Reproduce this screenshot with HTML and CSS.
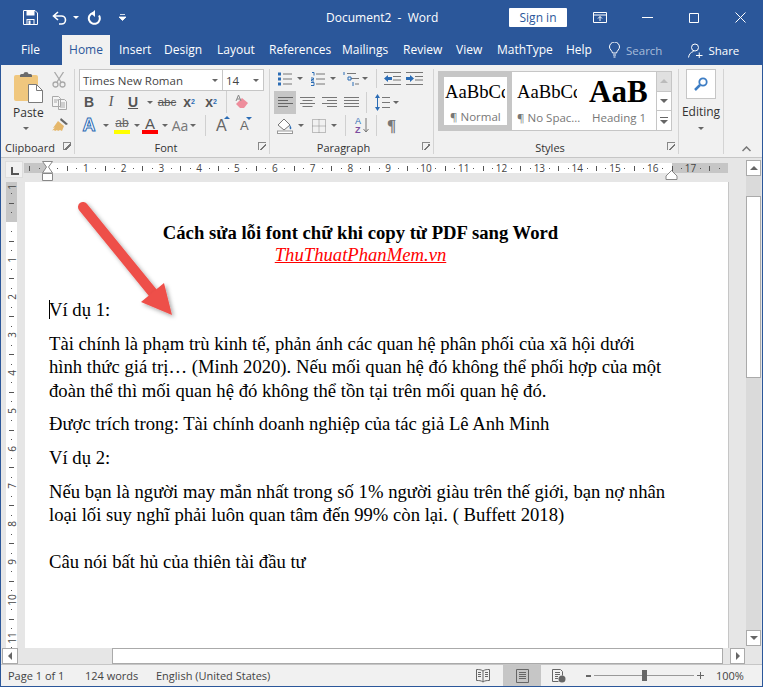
FILE: index.html
```html
<!DOCTYPE html>
<html lang="vi">
<head>
<meta charset="utf-8">
<title>Document2 - Word</title>
<link rel="stylesheet" href="styles.css">
</head>
<body>
<div class="app">
  <header class="titlebar">
    <div class="qat">
      <svg class="i-save" width="15" height="15" viewBox="0 0 15 15"><path d="M.5.500h11.500l2.500 2.500v11.500H.5z" fill="none" stroke="#fff"/><path d="M3.500 1h8v4.500h-8zM3.500 9h8v5.500h-1V10H4.500v4.500h-1zM5.500 10.500h2v3.500h-2z" fill="#fff"/></svg>
      <svg class="i-undo" width="15" height="14" viewBox="0 0 15 14"><path d="M6 1 1.500 5 6 9M2 5h7.500a4 4 0 0 1 0 8H7" fill="none" stroke="#fff" stroke-width="1.600"/></svg>
      <span class="caret caret-w qat-caret"></span>
      <svg class="i-redo" width="14" height="15" viewBox="0 0 14 15"><path d="M6 3a5.500 5.500 0 1 0 6 2.500" fill="none" stroke="#fff" stroke-width="2"/><path d="M8 0v7l-4-3.500z" fill="#fff"/></svg>
      <svg class="i-cust" width="7" height="7" viewBox="0 0 7 7"><path d="M1 .5h5M0 3h7l-3.500 3.500z" stroke="#fff" fill="#fff" stroke-width=".8"/></svg>
    </div>
    <div class="doc-title">Document2&nbsp; -&nbsp; Word</div>
    <div class="win">
      <button class="signin">Sign in</button>
      <svg class="i-rd" width="14" height="11" viewBox="0 0 14 11"><path d="M.5.500h13v10H.5zM.5 3h13M7 9V4.500M5 6.500l2-2 2 2" fill="none" stroke="#fff"/></svg>
      <svg class="i-min" width="11" height="1" viewBox="0 0 11 1"><path d="M0 .5h11" stroke="#fff"/></svg>
      <svg class="i-max" width="10" height="10" viewBox="0 0 10 10"><path d="M.5.500h9v9h-9z" fill="none" stroke="#fff"/></svg>
      <svg class="i-x" width="11" height="11" viewBox="0 0 11 11"><path d="M.5.500l10 10M10.500.500l-10 10" stroke="#fff"/></svg>
    </div>
  </header>

  <nav class="tabs">
    <span class="tab tab-file">File</span>
    <span class="tab tab-home">Home</span>
    <span class="tab t-insert">Insert</span>
    <span class="tab t-design">Design</span>
    <span class="tab t-layout">Layout</span>
    <span class="tab t-refs">References</span>
    <span class="tab t-mail">Mailings</span>
    <span class="tab t-review">Review</span>
    <span class="tab t-view">View</span>
    <span class="tab t-math">MathType</span>
    <span class="tab t-help">Help</span>
    <span class="tell">
      <svg width="11" height="16" viewBox="0 0 11 16"><path d="M3.500 11C3 8.500.5 7.500.5 5a5 5 0 0 1 10 0c0 2.500-2.500 3.500-3 6zM4 13h3M4.500 15h2" fill="none" stroke="#fff"/></svg>
      <span class="search">Search</span>
    </span>
    <span class="share">
      <svg width="15" height="15" viewBox="0 0 15 15"><circle cx="7" cy="4.500" r="3.500" fill="none" stroke="#fff"/><path d="M.5 14.500c.5-3.500 2.500-5.500 5-6M8 12.500h6.500M11.250 9.500v6" fill="none" stroke="#fff"/></svg>
      Share
    </span>
  </nav>

  <section class="ribbon">
    <div class="group g-clip">
      <div class="g-body clip-body">
        <div class="paste">
          <svg width="29" height="31" viewBox="0 0 29 31"><rect x="0" y="3" width="24" height="26" rx="2" fill="#f0c77e"/><path d="M6 3a2 2 0 0 1 2-1h1.500a2.500 2 0 0 1 5 0H16a2 2 0 0 1 2 1v2H6z" fill="#6b6b6b"/><path d="M14.500 12.500h8l6 6v12h-14z" fill="#fff" stroke="#7a7a7a"/><path d="M22.500 12.500v6h6" fill="none" stroke="#7a7a7a"/></svg>
          <span class="paste-label">Paste</span>
          <span class="caret"></span>
        </div>
        <div class="clip-tools">
          <svg width="14" height="16" viewBox="0 0 14 16"><path d="M2.500 0 9 10M11.500 0 5 10" stroke="#a9a9a9" stroke-width="1.300" fill="none"/><circle cx="3.500" cy="12.500" r="2.500" fill="none" stroke="#a9a9a9" stroke-width="1.300"/><circle cx="10.500" cy="12.500" r="2.500" fill="none" stroke="#a9a9a9" stroke-width="1.300"/></svg>
          <svg width="15" height="14" viewBox="0 0 15 14"><path d="M.5.500h6l2 2v8h-8zM6.500 3.500h6l2 2v8h-8zM2 4h4M2 6h3M8 7h5M8 9h5M8 11h5" fill="#f5f5f5" stroke="#a9a9a9"/></svg>
          <svg width="16" height="14" viewBox="0 0 16 14"><path d="M9 0l7 6-2 1-6-5z" fill="#666"/><path d="M6 3l6 5-2 5-2-1-2 1-1-1-2 1-1-1-2 .5 3-3-2 .5z" fill="#e5b76b"/></svg>
        </div>
      </div>
      <div class="g-label">Clipboard<span class="launch"></span></div>
    </div>

    <div class="group g-font">
      <div class="g-body font-body">
        <div class="selects">
          <div class="sel sel-font"><span>Times New Roman</span><i class="caret"></i></div>
          <div class="sel sel-size"><span>14</span><i class="caret"></i></div>
        </div>
        <div class="row row-font2">
          <span class="tool w22 tb">B</span>
          <span class="tool w22 ti">I</span>
          <span class="tool w22 tu">U</span><span class="caret c13"></span>
          <span class="tool w22 ts">abc</span>
          <span class="tool w22 tx">x<sub>2</sub></span>
          <span class="tool w22 tx">x<sup>2</sup></span>
          <span class="vsep sep-a"></span>
          <svg class="erase" width="16" height="16" viewBox="0 0 16 16"><path d="M5 14l-4-4 6-6 6 5-4 5z" fill="#ee8d9c"/><path d="M1 7l2.500-6L6 7M2 5h3" fill="none" stroke="#888"/></svg>
        </div>
        <div class="row row-font3">
          <span class="tool w22 te">A</span><span class="caret c13 c-te"></span>
          <span class="hl"><span class="hl-t">ab</span><span class="hl-b"></span></span><span class="caret c13 c-hl"></span>
          <span class="fc"><span class="fc-t">A</span><span class="fc-b"></span></span><span class="caret c13 c-fc"></span>
          <span class="tool aa">Aa</span><span class="caret c13 c-aa"></span>
          <span class="vsep sep-b"></span>
          <span class="grow">A<i class="tri-up"></i></span>
          <span class="shrink">A<i class="tri-dn"></i></span>
        </div>
      </div>
      <div class="g-label">Font<span class="launch"></span></div>
    </div>

    <div class="group g-para">
      <div class="g-body para-body">
        <div class="row row-p1">
          <svg width="14" height="14" viewBox="0 0 14 14"><path d="M5 2h9M5 7h9M5 12h9" stroke="#777"/><path d="M0 .500h3v3H0zM0 5.500h3v3H0zM0 10.500h3v3H0z" fill="#2b6cb5"/></svg><span class="caret c-a"></span>
          <svg class="ic-num" width="14" height="14" viewBox="0 0 14 14"><path d="M5 2h9M5 7h9M5 12h9" stroke="#777"/><path d="M1 .500h2v3M0 6h2.500v1.500H.500V9h2.500M0 10.500h3v3H0" fill="none" stroke="#2b6cb5"/></svg><span class="caret c-a"></span>
          <svg class="ic-ml" width="17" height="14" viewBox="0 0 17 14"><path d="M4 1.500h9M8 6.500h8M12 12h4" stroke="#777"/><path d="M1 0v3M5 5h3v3H5zM10 10v4" stroke="#2b6cb5" fill="none"/></svg><span class="caret c-b"></span>
          <span class="vsep sep-c"></span>
          <svg class="ic-out" width="17" height="13" viewBox="0 0 17 13"><path d="M0 .5h17M9 4.500h8M9 8h8M0 12.500h17" stroke="#777"/><path d="M0 6.500 4 3v2h4v3H4v2z" fill="#2b6cb5"/></svg>
          <svg class="ic-in" width="17" height="13" viewBox="0 0 17 13"><path d="M0 .5h17M9 4.500h8M9 8h8M0 12.500h17" stroke="#777"/><path d="M8 6.500 4 3v2H0v3h4v2z" fill="#2b6cb5"/></svg>
        </div>
        <div class="row row-p2">
          <span class="al al-on"><svg width="15" height="11" viewBox="0 0 15 11"><path d="M0 .5h15M0 3.500h10M0 6.500h15M0 9.500h10" stroke="#666"/></svg></span>
          <span class="al"><svg width="15" height="11" viewBox="0 0 15 11"><path d="M0 .5h15M2.500 3.500h10M0 6.500h15M2.500 9.500h10" stroke="#777"/></svg></span>
          <span class="al"><svg width="15" height="11" viewBox="0 0 15 11"><path d="M0 .5h15M5 3.500h10M0 6.500h15M5 9.500h10" stroke="#777"/></svg></span>
          <span class="al"><svg width="15" height="11" viewBox="0 0 15 11"><path d="M0 .5h15M0 3.500h15M0 6.500h15M0 9.500h15" stroke="#777"/></svg></span>
          <span class="vsep sep-d"></span>
          <svg class="ic-ls" width="15" height="17" viewBox="0 0 15 17"><path d="M7 3.500h8M7 8.500h8M7 13.500h8" stroke="#777"/><path d="M2.500 3v11" stroke="#2b6cb5"/><path d="M2.500 0 5 4H0zM2.500 17 5 13H0z" fill="#2b6cb5"/></svg><span class="caret c-c"></span>
        </div>
        <div class="row row-p3">
          <svg class="ic-shade" width="16" height="16" viewBox="0 0 16 16"><path d="M1 7l6-6 6 6-6 5z" fill="#fff" stroke="#777"/><path d="M13 7c1 2 2 3 1 4s-2-1-1-4" fill="#2b6cb5"/><rect x=".5" y="13" width="15" height="2.500" fill="#fff" stroke="#999"/></svg><span class="caret c-d"></span>
          <svg class="ic-bord" width="14" height="14" viewBox="0 0 14 14"><path d="M.5.500h13v13H.5zM7 .5v13M.5 7h13" fill="none" stroke="#888" stroke-dasharray="1 1"/></svg><span class="caret c-e"></span>
          <span class="vsep sep-e"></span>
          <span class="sort"><span class="az"><b class="sa">A</b><b class="sz">Z</b></span><svg width="6" height="15" viewBox="0 0 6 15"><path d="M3 0v14M.5 11 3 14l2.500-3" fill="none" stroke="#777"/></svg></span>
          <span class="vsep sep-f"></span>
          <span class="pil">¶</span>
        </div>
      </div>
      <div class="g-label">Paragraph<span class="launch"></span></div>
    </div>

    <div class="group g-styles">
      <div class="g-body styles-body">
        <div class="gallery">
          <div class="st st-normal"><span class="st-prev">AaBbCc</span><span class="st-name">¶ Normal</span></div>
          <div class="st st-nospace"><span class="st-prev">AaBbCc</span><span class="st-name">¶ No Spac...</span></div>
          <div class="st st-head"><span class="st-big">AaB</span><span class="st-name">Heading 1</span></div>
          <div class="st-scroll">
            <span class="sb sb-up"><i class="tri-s up"></i></span>
            <span class="sb"><i class="tri-s"></i></span>
            <span class="sb sb-more"><i class="bar"></i><i class="tri-s"></i></span>
          </div>
        </div>
      </div>
      <div class="g-label">Styles<span class="launch"></span></div>
    </div>

    <div class="group g-edit">
      <div class="edit-btn"><svg width="14" height="14" viewBox="0 0 14 14"><circle cx="9" cy="5" r="3.700" fill="none" stroke="#3d7dc4" stroke-width="1.800"/><path d="M6 8l-5 5" stroke="#3d7dc4" stroke-width="2.500"/></svg></div>
      <span class="edit-label">Editing</span>
      <span class="caret"></span>
    </div>
    <div class="collapse"><svg width="9" height="6" viewBox="0 0 9 6"><path d="M.5 5 4.500 1l4 4" fill="none" stroke="#777" stroke-width="1.500"/></svg></div>
  </section>

  <main class="work">
    <div class="corner"><span class="l-mark"></span></div>
    <div class="hruler">
      <div class="hr-in">
        <span class="cm">&nbsp;</span><span class="cm">1</span><span class="cm">2</span><span class="cm">3</span><span class="cm">4</span><span class="cm">5</span><span class="cm">6</span><span class="cm">7</span><span class="cm">8</span><span class="cm">9</span><span class="cm">10</span><span class="cm">11</span><span class="cm">12</span><span class="cm">13</span><span class="cm">14</span><span class="cm">15</span><span class="cm">16</span><span class="cm">17</span><span class="cm cm-end"></span>
      </div>
      <svg class="mark-l" width="13" height="21" viewBox="0 0 13 21"><path d="M1.500.5h10L7.500 6l4 6h-10l4-6z" fill="#fff" stroke="#888"/><path d="M1.500 12.500h10v7h-10z" fill="#fff" stroke="#888"/></svg>
      <svg class="mark-r" width="13" height="10" viewBox="0 0 13 10"><path d="M6.500.5 12 6v3.500H1V6z" fill="#fff" stroke="#888"/></svg>
    </div>
    <div class="vscroll">
      <span class="vb"><i class="tri-s up"></i></span>
      <span class="vtrack"><span class="vthumb"></span></span>
      <span class="vb"><i class="tri-s"></i></span>
    </div>
    <div class="vruler">
      <span class="vcm vcm-top"><b>1</b></span><span class="vcm"><b>&nbsp;</b></span><span class="vcm"><b>1</b></span><span class="vcm"><b>2</b></span><span class="vcm"><b>3</b></span><span class="vcm"><b>4</b></span><span class="vcm"><b>5</b></span><span class="vcm"><b>6</b></span><span class="vcm"><b>7</b></span><span class="vcm"><b>8</b></span><span class="vcm"><b>9</b></span><span class="vcm"><b>10</b></span><span class="vcm vcm-end"><b>11</b></span>
    </div>
    <article class="page">
      <h1 class="doc-h">Cách sửa lỗi font chữ khi copy từ PDF sang Word</h1>
      <p class="doc-link">ThuThuatPhanMem.vn</p>
      <p class="ex1"><span class="cursor"></span>Ví dụ 1:</p>
      <p class="body-p">Tài chính là phạm trù kinh tế, phản ánh các quan hệ phân phối của xã hội dưới<br>hình thức giá trị… (Minh 2020). Nếu mối quan hệ đó không thể phối hợp của một<br>đoàn thể thì mối quan hệ đó không thể tồn tại trên mối quan hệ đó.</p>
      <p class="body-p">Được trích trong: Tài chính doanh nghiệp của tác giả Lê Anh Minh</p>
      <p class="body-p">Ví dụ 2:</p>
      <p class="body-p">Nếu bạn là người may mắn nhất trong số 1% người giàu trên thế giới, bạn nợ nhân<br>loại lối suy nghĩ phải luôn quan tâm đến 99% còn lại. ( Buffett 2018)</p>
      <p class="body-p last">Câu nói bất hủ của thiên tài đầu tư</p>
      <svg class="arrow" width="110" height="130" viewBox="0 0 110 130">
        <defs><filter id="sh" x="-20%" y="-20%" width="150%" height="150%"><feDropShadow dx="2" dy="2" stdDeviation="2" flood-color="#000" flood-opacity=".35"/></filter></defs>
        <path d="M8 8 78 94" stroke="#ee4f4a" stroke-width="10" stroke-linecap="round" fill="none" filter="url(#sh)"/>
        <path d="M97 116 66 103 89 84z" fill="#ee4f4a" filter="url(#sh)"/>
      </svg>
    </article>
  </main>

  <div class="hscroll">
    <span class="hb"><i class="tri-h left"></i></span>
    <span class="hthumb"></span>
    <span class="hb hb-r"><i class="tri-h right"></i></span>
  </div>

  <footer class="status">
    <span class="s-page">Page 1 of 1</span>
    <span class="s-words">124 words</span>
    <span class="s-lang">English (United States)</span>
    <svg class="s-read" width="14" height="14" viewBox="0 0 14 14"><path d="M7 2C5 .5 3 .5.500.5v11C3 11.500 5 11.500 7 13c2-1.500 4-1.500 6.500-1.500V.5C11 .5 9 .5 7 2zM7 2v11M2 3.500h3M2 5.500h3M2 7.500h3M9 3.500h3M9 5.500h3M9 7.500h3" fill="none" stroke="#666"/></svg>
    <span class="s-print"><svg width="13" height="14" viewBox="0 0 13 14"><path d="M.5.500h12v13H.5zM3 3.500h7M3 5.500h7M3 7.500h7M3 9.500h7" fill="none" stroke="#666"/></svg></span>
    <svg class="s-web" width="14" height="14" viewBox="0 0 14 14"><path d="M.5.500h8l2 2v4M.5.500v12h6M3 3.500h5M3 5.500h5M3 7.500h3M3 9.500h3" fill="none" stroke="#666"/><circle cx="10" cy="10" r="3.500" fill="#666"/></svg>
    <span class="z-minus"></span>
    <span class="slider"><span class="knob"></span></span>
    <span class="z-plus"></span>
    <span class="s-zoom">100%</span>
  </footer>
</div>
</body>
</html>
```
FILE: styles.css
```css
* { box-sizing: border-box; }
html, body { margin: 0; padding: 0; }
body { width: 763px; height: 687px; overflow: hidden; font-family: "Open Sans", "Noto Sans", sans-serif; font-size: 11.5px; color: #444; }
svg { display: block; flex: none; }
i { font-style: normal; }
.app { width: 763px; height: 687px; display: flex; flex-direction: column; background: #e6e6e6; border: 1px solid #2b579a; border-top: 0; }

.caret { display: inline-block; width: 0; height: 0; border: 3.5px solid transparent; border-top: 3.5px solid #666; border-bottom: 0; flex: none; }
.caret-w { border-top-color: #fff; }

.titlebar { height: 35px; background: #2b579a; display: flex; align-items: center; color: #fff; position: relative; }
.qat { display: flex; align-items: center; padding-left: 22px; width: 325px; }
.i-save { margin-right: 14px; }
.qat-caret { margin: 0 0 0 6px; }
.i-redo { margin-left: 8px; }
.i-cust { margin-left: 18px; }
.doc-title { width: 183px; font-size: 12px; color: #fff; white-space: nowrap; }
.win { display: flex; align-items: center; }
.signin { width: 58px; height: 19px; background: #fff; color: #2b579a; border: 0; border-radius: 1px; font: 12px "Open Sans", sans-serif; padding: 0; margin-right: 26px; }
.i-rd { margin-right: 35px; }
.i-min { margin-right: 36px; }
.i-max { margin-right: 36px; }

.tabs { height: 30px; background: #2b579a; display: flex; align-items: flex-start; color: #fff; padding-left: 20px; font-size: 12px; white-space: nowrap; }
.tab { height: 30px; line-height: 30px; display: block; }
.tab-file { width: 41px; }
.tab-home { width: 48px; background: #f1f1f1; color: #2b579a; text-align: center; margin-right: 9px; }
.t-insert { width: 45px; }
.t-design { width: 53px; }
.t-layout { width: 52px; }
.t-refs { width: 73px; }
.t-mail { width: 61px; }
.t-review { width: 53px; }
.t-view { width: 41px; }
.t-math { width: 69px; }
.t-help { width: 42px; }
.tell { display: flex; align-items: center; height: 30px; gap: 6px; margin-left: 1px; }
.search { color: #a9bcd9; font-size: 11.5px; }
.share { display: flex; align-items: center; height: 30px; gap: 5px; margin-left: 26px; font-size: 11.5px; }

.ribbon { height: 93px; background: #f1f1f1; border-bottom: 1px solid #c6c6c6; display: flex; align-items: flex-start; padding-top: 4px; position: relative; }
.group { height: 85px; border-right: 1px solid #d4d4d4; display: flex; flex-direction: column; flex: none; }
.g-body { height: 73px; }
.g-label { height: 13px; line-height: 13px; text-align: center; font-size: 11px; position: relative; color: #333; margin-top: 1px; padding-right: 16px; }
.launch { position: absolute; right: 3px; top: 1px; width: 8px; height: 8px; border-left: 1px solid #888; border-top: 1px solid #888; background: linear-gradient(135deg, transparent 50%, #777 50%, #777 65%, transparent 65%); }
.row { display: flex; align-items: center; height: 23px; }
.tool { display: flex; align-items: center; justify-content: center; flex: none; color: #555; }
.w22 { width: 22px; }
.vsep { width: 1px; background: #d0d0d0; flex: none; height: 22px; }

.g-clip { width: 74px; }
.g-clip .g-label { text-align: left; padding: 0 0 0 4px; }
.clip-body { display: flex; }
.paste { width: 50px; padding: 3px 0 0 13px; display: flex; flex-direction: column; }
.paste-label { font-size: 12px; color: #333; line-height: 20px; width: 30px; margin-left: -1px; }
.paste .caret { margin: 4px 0 0 9px; }
.clip-tools { display: flex; flex-direction: column; gap: 8px; padding-left: 1px; padding-top: 3px; }

.g-font { width: 195px; padding-left: 4px; }
.selects { display: flex; }
.sel { height: 22px; background: #fff; border: 1px solid #c6c6c6; display: flex; align-items: center; justify-content: space-between; padding: 0 4px 0 3px; font-size: 11.5px; color: #444; }
.sel-font { width: 144px; }
.sel-size { width: 41px; margin-left: 0; border-left: 0; }
.row-font2 { height: 22px; margin-left: -1px; }
.row-font2 .caret { margin-right: 3px; }
.row-font3 { margin: 1px 0 0 -1px; }
.tb { font: bold 14px "Liberation Sans", sans-serif; }
.ti { font: italic 14px "Liberation Serif", serif; }
.tu { font: bold 14px "Liberation Sans", sans-serif; text-decoration: underline; }
.ts { font: 11.5px "Liberation Sans", sans-serif; text-decoration: line-through; }
.tx { font: bold 14px "Liberation Sans", sans-serif; }
.tx sub, .tx sup { font-size: 7px; color: #2b6cb5; line-height: 0; }
.c13 { margin-left: 3px; margin-right: 3px; }
.sep-a { margin-left: 4px; margin-right: 8px; }
.row-font3 .tool { height: 20px; }
.te { font: bold 18px "Liberation Sans", sans-serif; color: #fff; -webkit-text-stroke: 1px #2b6cb5; }
.hl { width: 16px; margin-left: 2px; display: flex; flex-direction: column; align-items: center; }
.hl-t { font: 12px/13px "Liberation Sans", sans-serif; text-decoration: line-through; color: #666; }
.hl-b { width: 16px; height: 4px; background: #ffff00; }
.c-hl { margin-left: 4px; margin-right: 1px; }
.fc { width: 16px; margin-left: 1px; display: flex; flex-direction: column; align-items: center; }
.fc-t { font: 15px/13px "Liberation Sans", sans-serif; color: #555; }
.fc-b { width: 16px; height: 4px; background: #f00; }
.c-fc { margin-left: 4px; margin-right: 0; }
.aa { width: 16px; margin-left: 4px; font: 14px "Open Sans", sans-serif; color: #777; }
.c-aa { margin-left: 2px; margin-right: 0; }
.sep-b { margin-left: 9px; margin-right: 10px; height: 21px; }
.grow, .shrink { position: relative; font: 16px "Liberation Sans", sans-serif; color: #666; width: 15px; flex: none; }
.grow { margin-right: 9px; }
.shrink { font-size: 13px; width: 10px; }
.tri-up, .tri-dn { position: absolute; left: 8px; width: 0; height: 0; border: 3px solid transparent; }
.tri-up { top: -1px; border-bottom: 3px solid #2b6cb5; border-top: 0; }
.tri-dn { top: -1px; left: 6px; border-top: 3px solid #2b6cb5; border-bottom: 0; }

.g-para { width: 164px; }
.para-body { padding-left: 4px; }
.row-p1 { padding-left: 4px; height: 19px; margin-bottom: 3px; }
.c-a { margin-left: 5px; }
.ic-num { margin-left: 8px; }
.ic-ml { margin-left: 7px; }
.c-b { margin-left: 2px; }
.sep-c { margin-left: 8px; margin-right: 7px; height: 19px; }
.ic-in { margin-left: 5px; }
.row-p2 { height: 23px; }
.al { width: 22px; height: 23px; display: flex; align-items: center; justify-content: center; }
.al-on { background: #c6c6c6; }
.sep-d { margin: 0 8px 0 4px; height: 21px; }
.c-c { margin-left: 3px; }
.row-p3 { padding-left: 3px; height: 23px; }
.c-d { margin-left: 5px; }
.ic-bord { margin-left: 8px; }
.c-e { margin-left: 5px; }
.sep-e { margin: 0 9px 0 8px; height: 21px; }
.sort { display: flex; align-items: center; gap: 2px; width: 14px; flex: none; }
.az { display: flex; flex-direction: column; font: bold 9px/9px "Liberation Sans", sans-serif; }
.sa { color: #2b6cb5; font-weight: 400; }
.sz { color: #7d4ea0; }
.sep-f { margin: 0 10px 0 7px; height: 21px; }
.pil { font: bold 17px "Liberation Serif", serif; color: #777; }

.g-styles { width: 245px; padding-left: 4px; }
.gallery { margin-top: 2px; width: 234px; height: 60px; background: #fff; border: 1px solid #c6c6c6; display: flex; }
.st { display: flex; flex-direction: column; flex: none; white-space: nowrap; overflow: hidden; height: 58px; background: #fff; }
.st-normal { width: 73px; border: 5px solid #c6c6c6; padding-left: 1px; }
.st-normal .st-prev { padding-top: 5px; height: 25px; }
.st-nospace { width: 72px; padding-left: 5px; }
.st-nospace .st-prev { padding-top: 10px; height: 30px; }
.st-head { width: 72px; padding-left: 5px; }
.st-prev { font: 18.67px/20px "Liberation Serif", serif; color: #000; width: 60px; overflow: hidden; display: block; }
.st-name { font-size: 11.5px; color: #777; line-height: 16px; margin-top: 8px; }
.st-big { font: bold 31px/34px "Liberation Serif", serif; color: #000; padding-top: 3px; display: block; height: 38px; }
.st-head .st-name { margin-top: 0; padding-left: 3px; }
.st-normal .st-name { margin-top: 8px; padding-left: 5px; }
.st-nospace .st-name { padding-left: 0; }
.st-scroll { display: flex; flex-direction: column; width: 15px; border-left: 1px solid #c6c6c6; flex: none; }
.sb { flex: 1; display: flex; flex-direction: column; align-items: center; justify-content: center; gap: 2px; border-bottom: 1px solid #c6c6c6; }
.sb:last-child { border-bottom: 0; }
.sb-up { background: #e0e0e0; }
.tri-s { width: 0; height: 0; border: 4px solid transparent; border-top: 4px solid #666; border-bottom: 0; }
.tri-s.up { border-top: 0; border-bottom: 4px solid #666; }
.sb-up .tri-s.up { border-bottom-color: #bbb; }
.bar { width: 8px; height: 1px; background: #666; }

.g-edit { width: 45px; align-items: center; }
.edit-btn { width: 30px; height: 30px; background: #fff; border: 1px solid #c6c6c6; display: flex; align-items: center; justify-content: center; }
.edit-label { font-size: 12px; line-height: 16px; margin-top: 5px; color: #333; }
.g-edit .caret { margin-top: 7px; }
.collapse { position: absolute; right: 11px; bottom: 5px; }

.work { height: 490px; display: grid; grid-template-columns: 24px 704px 17px 16px; grid-template-rows: 24px 466px; }
.corner { grid-column: 1; grid-row: 1; padding: 3px 0 0 4px; }
.l-mark { display: flex; width: 18px; height: 17px; background: #f1f1f1; border: 1px solid #ddd; position: relative; }
.l-mark::after { content: ""; position: absolute; left: 5px; top: 5px; width: 6px; height: 6px; border-left: 2px solid #555; border-bottom: 2px solid #555; }
.hruler { grid-column: 2; grid-row: 1; position: relative; margin-left: -1px; width: 704px; }
.hr-in { position: absolute; left: 0; top: 5px; width: 704px; height: 10px; display: flex; padding-left: 5.1px; background: linear-gradient(90deg, #c6c6c6 24px, #fff 24px, #fff 648px, #c6c6c6 648px); }
.cm { flex: 0 0 37.8px; height: 10px; font: 10px/10px "Open Sans", sans-serif; color: #444; text-align: center;
  background-image: linear-gradient(#555, #555), linear-gradient(#555, #555), linear-gradient(#555, #555);
  background-repeat: no-repeat; background-size: 1px 5px, 1px 1px, 1px 1px; background-position: 0 3px, 9.45px 5px, 28.35px 5px; }
.cm-end { flex-basis: 18.9px; background-position: 0 3px, 9.45px 5px, 40px 5px; }
.mark-l { position: absolute; left: 17px; top: 3px; }
.mark-r { position: absolute; left: 641px; top: 12px; }
.vscroll { grid-column: 4; grid-row: 1 / 3; display: flex; flex-direction: column; padding-top: 2px; width: 15px; height: 488px; }
.vb { height: 16px; background: #fff; border: 1px solid #aaa; display: flex; align-items: center; justify-content: center; flex: none; }
.vtrack { flex: 1; background: #dadada; padding-top: 20px; }
.vthumb { display: block; height: 182px; background: #fff; border: 1px solid #aaa; }
.vruler { grid-column: 1; grid-row: 2; margin: 0 6px 0 5px; width: 11px; height: 466px; display: flex; flex-direction: column; background: linear-gradient(180deg, #c6c6c6 40px, #fff 40px); }
.vcm { flex: 0 0 37.8px; width: 11px; display: flex; align-items: center; justify-content: center;
  background-image: linear-gradient(#555, #555), linear-gradient(#555, #555), linear-gradient(#555, #555);
  background-repeat: no-repeat; background-size: 5px 1px, 1px 1px, 1px 1px; background-position: 3px 0, 5px 9.45px, 5px 28.35px; }
.vcm-top { flex-basis: 20.9px; align-items: flex-start; background-position: 3px -10px, 5px 11.45px, 5px -10px; }
.vcm-end { flex: 0 0 29.3px; align-items: flex-start; padding-top: 13.9px; }
.vcm b { font: 10px/10px "Open Sans", sans-serif; color: #444; transform: rotate(-90deg); display: block; white-space: nowrap; font-weight: 400; }
.page { grid-column: 2; grid-row: 2; background: #fff; border-right: 1px solid #c6c6c6; padding: 40px 0 0 24px; position: relative; font: 18.67px/23.6px "Liberation Serif", serif; color: #000; white-space: nowrap; overflow: hidden; }
.doc-h { margin: 0; width: 623px; text-align: center; font: bold 18.67px/22px "Liberation Serif", serif; }
.doc-link { margin: 0; width: 623px; text-align: center; color: #f00; font-style: italic; text-decoration: underline; line-height: 22px; }
.ex1 { margin: 32px 0 0; position: relative; }
.cursor { position: absolute; left: 0; top: 2px; width: 1px; height: 19px; background: #000; }
.body-p { margin: 10px 0 0; }
.body-p.last { margin-top: 23px; }
.arrow { position: absolute; left: 50px; top: 17px; }

.hscroll { height: 16px; display: flex; padding-left: 1px; background: #e6e6e6; }
.hb { width: 16px; height: 16px; background: #fff; border: 1px solid #aaa; display: flex; align-items: center; justify-content: center; }
.hb-r { margin-left: 7px; width: 15px; }
.hthumb { width: 611px; height: 16px; background: #fff; border: 1px solid #aaa; margin-left: 94px; }
.tri-h { width: 0; height: 0; border: 4px solid transparent; }
.tri-h.left { border-right: 4px solid #666; border-left: 0; }
.tri-h.right { border-left: 4px solid #666; border-right: 0; }

.status { flex: 1; margin-top: 0; background: #f1f1f1; border-top: 1px solid #c6c6c6; display: flex; align-items: center; font-size: 11px; color: #444; white-space: nowrap; }
.s-page { margin-left: 7px; width: 77px; }
.s-words { width: 71px; }
.s-lang { width: 320px; }
.s-read { margin-right: 13px; }
.s-print { width: 38px; height: 100%; background: #c6c6c6; display: flex; align-items: center; justify-content: center; }
.s-web { margin-left: 11px; }
.z-minus { width: 5px; height: 2px; background: #666; margin-left: 20px; }
.slider { width: 100px; height: 1px; background: #999; margin-left: 3px; position: relative; }
.knob { position: absolute; left: 48px; top: -5px; width: 5px; height: 11px; background: #666; }
.z-plus { width: 7px; height: 7px; margin-left: 3px; background: linear-gradient(#666, #666) center/7px 1px no-repeat, linear-gradient(#666, #666) center/1px 7px no-repeat; }
.s-zoom { margin-left: 12px; }
```
